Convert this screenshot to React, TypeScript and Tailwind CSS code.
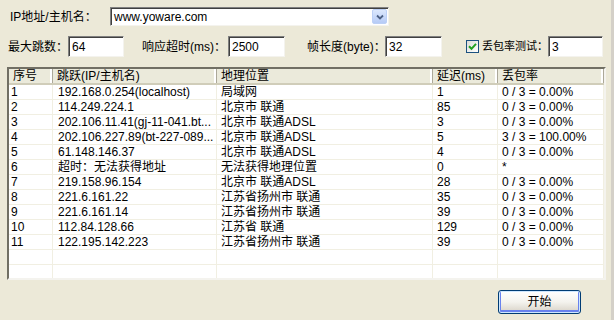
import React from "react";

const rows: [string, string, string, string, string][] = [
  ["1", "192.168.0.254(localhost)", "局域网", "1", "0 / 3 = 0.00%"],
  ["2", "114.249.224.1", "北京市 联通", "85", "0 / 3 = 0.00%"],
  ["3", "202.106.11.41(gj-11-041.bt...", "北京市 联通ADSL", "3", "0 / 3 = 0.00%"],
  ["4", "202.106.227.89(bt-227-089...", "北京市 联通ADSL", "5", "3 / 3 = 100.00%"],
  ["5", "61.148.146.37", "北京市 联通ADSL", "4", "0 / 3 = 0.00%"],
  ["6", "超时：无法获得地址", "无法获得地理位置", "0", "*"],
  ["7", "219.158.96.154", "北京市 联通ADSL", "28", "0 / 3 = 0.00%"],
  ["8", "221.6.161.22", "江苏省扬州市 联通", "35", "0 / 3 = 0.00%"],
  ["9", "221.6.161.14", "江苏省扬州市 联通", "39", "0 / 3 = 0.00%"],
  ["10", "112.84.128.66", "江苏省 联通", "129", "0 / 3 = 0.00%"],
  ["11", "122.195.142.223", "江苏省扬州市 联通", "39", "0 / 3 = 0.00%"],
  ["", "", "", "", ""],
  ["", "", "", "", ""],
];

const cols = [
  { w: "w-[44px]", pad: "pl-[2px]" },
  { w: "w-[164px]", pad: "pl-[5px]" },
  { w: "w-[216px]", pad: "pl-[4px]" },
  { w: "w-[65px]", pad: "pl-[4px]" },
  { w: "w-[106px]", pad: "pl-[4px]" },
];

const headers = ["序号", "跳跃(IP/主机名)", "地理位置", "延迟(ms)", "丢包率"];

function Field({ value, w }: { value: string; w: string }) {
  return (
    <div
      className={`${w} h-[21px] shrink-0 bg-white border border-t-[#808080] border-l-[#808080] border-r-[#f4f3ee] border-b-[#f4f3ee] shadow-[inset_1px_1px_0_#404040] flex items-center pl-[3px] text-[12px] leading-none`}
    >
      {value}
    </div>
  );
}

export default function App() {
  return (
    <div className="w-[614px] h-[320px] bg-[#ece9d8] flex flex-col overflow-hidden text-black font-['Liberation_Sans','Noto_Sans_CJK_SC',sans-serif] text-[12px] border-r-[3px] border-r-[#d4d0c8]">
      {/* row 1 */}
      <div className="flex items-center mt-[7px] h-[19px]">
        <div className="w-[110px] pl-[10px] whitespace-nowrap">IP地址/主机名：</div>
        <div className="w-[279px] h-[19px] bg-white border border-t-[#808080] border-l-[#808080] border-r-[#f4f3ee] border-b-[#f4f3ee] shadow-[inset_1px_1px_0_#404040] flex items-center">
          <div className="flex-1 pl-[3px] leading-none">www.yoware.com</div>
          <div className="w-[15px] h-[15px] mr-[1px] rounded-[2px] border border-[#bcd0f6] bg-gradient-to-b from-[#dce8fd] to-[#b6cbf6] flex items-center justify-center">
            <svg width="8" height="6" viewBox="0 0 8 6">
              <path d="M1 1.5 L4 4.5 L7 1.5" stroke="#4d6185" strokeWidth="1.8" fill="none" />
            </svg>
          </div>
        </div>
      </div>

      {/* row 2 */}
      <div className="flex items-center mt-[10px] h-[21px] whitespace-nowrap">
        <div className="w-[68px] shrink-0 pl-[8px]">最大跳数：</div>
        <Field value="64" w="w-[56px]" />
        <div className="w-[86px] shrink-0 ml-[18px]">响应超时(ms)：</div>
        <Field value="2500" w="w-[57px]" />
        <div className="w-[78px] shrink-0 ml-[22px]">帧长度(byte)：</div>
        <Field value="32" w="w-[57px]" />
        <div className="ml-[24px] shrink-0 w-[13px] h-[13px] border border-[#1c5180] bg-gradient-to-br from-[#dcdcd7] to-white flex items-center justify-center">
          <svg width="9" height="9" viewBox="0 0 9 9">
            <path d="M1 4.2 L3.5 6.8 L8 1.8" stroke="#21a121" strokeWidth="2" fill="none" />
          </svg>
        </div>
        <div className="w-[66px] shrink-0 ml-[3px] text-[11px] overflow-hidden">丢包率测试：</div>
        <Field value="3" w="w-[55px]" />
      </div>

      {/* table */}
      <div className="mt-[10px] ml-[7px] w-[599px] h-[213px] bg-white border-2 border-t-[#716f64] border-l-[#716f64] border-r-[#f4f3ee] border-b-[#f4f3ee] overflow-hidden">
        <div className="flex h-[16px] bg-[#ebeadb] border-b-2 border-b-[#d0cdb9]">
          {headers.map((h, i) => (
            <div
              key={i}
              className={`${cols[i].w} shrink-0 pl-[4px] leading-[15px] whitespace-nowrap border-r border-r-[#aca899] shadow-[inset_-2px_0_0_#ffffff]`}
            >
              {h}
            </div>
          ))}
        </div>
        {rows.map((r, ri) => (
          <div key={ri} className="flex h-[15px] border-b border-b-[#f1efe2]">
            {r.map((c, ci) => (
              <div
                key={ci}
                className={`${cols[ci].w} ${cols[ci].pad} shrink-0 leading-[14px] whitespace-nowrap overflow-hidden border-r border-r-[#f1efe2]`}
              >
                {c}
              </div>
            ))}
          </div>
        ))}
      </div>

      {/* button */}
      <div className="flex justify-end mt-[10px] pr-[30px]">
        <div className="w-[83px] h-[24px] rounded-[3px] border border-[#003c74] bg-gradient-to-b from-[#ffffff] via-[#f4f3ee] to-[#d6d0c5] shadow-[inset_0_0_0_1px_#cee7ff,inset_0_-1px_0_2px_#6982ee] flex items-center justify-center">
          开始
        </div>
      </div>
    </div>
  );
}
